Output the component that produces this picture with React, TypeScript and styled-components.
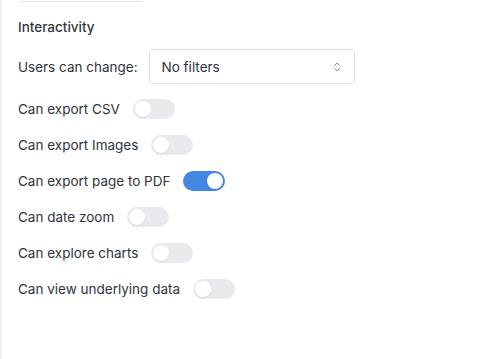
import React from 'react';
import styled, { createGlobalStyle } from 'styled-components';

const GlobalStyle = createGlobalStyle`
  html, body {
    margin: 0;
    padding: 0;
    background: #ffffff;
  }
  body {
    font-family: Inter, "Noto Sans", "Liberation Sans", sans-serif;
    color: #2e353b;
  }
`;

const Panel = styled.div`
  width: 483px;
  height: 359px;
  box-sizing: border-box;
  border-left: 2px solid #eceef1;
  padding: 0 0 0 16px;
  display: flex;
  flex-direction: column;
`;

const CutOffButton = styled.div`
  width: 122px;
  height: 2px;
  margin-left: 2px;
  border: 1px solid #e0e3e7;
  border-top: none;
  border-radius: 0 0 4px 4px;
  box-sizing: border-box;
`;

const Heading = styled.h3`
  margin: 16px 0 0 0;
  font-size: 13.5px;
  font-weight: 500;
  line-height: 18px;
  color: #343a40;
`;

const Row = styled.div<{ $top: number; $gap?: number }>`
  display: flex;
  align-items: center;
  gap: ${p => p.$gap ?? 13}px;
  margin-top: ${p => p.$top}px;
  font-size: 13.5px;
  line-height: 20px;
`;

const Label = styled.span`
  color: #2e353b;
  white-space: nowrap;
`;

const Select = styled.div`
  width: 206px;
  height: 35px;
  box-sizing: border-box;
  border: 1px solid #dcdfe4;
  border-radius: 4px;
  padding: 0 12px 0 12px;
  display: flex;
  align-items: center;
  justify-content: space-between;
  font-size: 13.5px;
  color: #2e353b;
`;

const Track = styled.div<{ $on?: boolean }>`
  width: 42px;
  height: 20px;
  border-radius: 10px;
  background: ${p => (p.$on ? '#4387e0' : '#e8e9ed')};
  position: relative;
  flex: none;
`;

const Knob = styled.div<{ $on?: boolean }>`
  position: absolute;
  top: 2px;
  left: ${p => (p.$on ? '24px' : '2px')};
  width: 16px;
  height: 16px;
  border-radius: 50%;
  background: #ffffff;
  box-shadow: 0 1px 1px rgba(0, 0, 0, 0.08);
`;

const Chevrons = () => (
  <svg width="10" height="12" viewBox="0 0 10 12" fill="none">
    <path d="M2.5 4.5 L5 2 L7.5 4.5" stroke="#8a9096" strokeWidth="1" strokeLinecap="round" strokeLinejoin="round" />
    <path d="M2.5 7.5 L5 10 L7.5 7.5" stroke="#8a9096" strokeWidth="1" strokeLinecap="round" strokeLinejoin="round" />
  </svg>
);

const Toggle: React.FC<{ on?: boolean }> = ({ on }) => (
  <Track $on={on}>
    <Knob $on={on} />
  </Track>
);

const options = [
  { label: 'Can export CSV', on: false },
  { label: 'Can export Images', on: false },
  { label: 'Can export page to PDF', on: true },
  { label: 'Can date zoom', on: false },
  { label: 'Can explore charts', on: false },
  { label: 'Can view underlying data', on: false },
];

export default function App() {
  return (
    <>
      <GlobalStyle />
      <Panel>
        <CutOffButton />
        <Heading>Interactivity</Heading>
        <Row $top={13} $gap={11}>
          <Label>Users can change:</Label>
          <Select>
            <span>No filters</span>
            <Chevrons />
          </Select>
        </Row>
        {options.map((o, i) => (
          <Row key={o.label} $top={i === 0 ? 15 : 16}>
            <Label>{o.label}</Label>
            <Toggle on={o.on} />
          </Row>
        ))}
      </Panel>
    </>
  );
}
